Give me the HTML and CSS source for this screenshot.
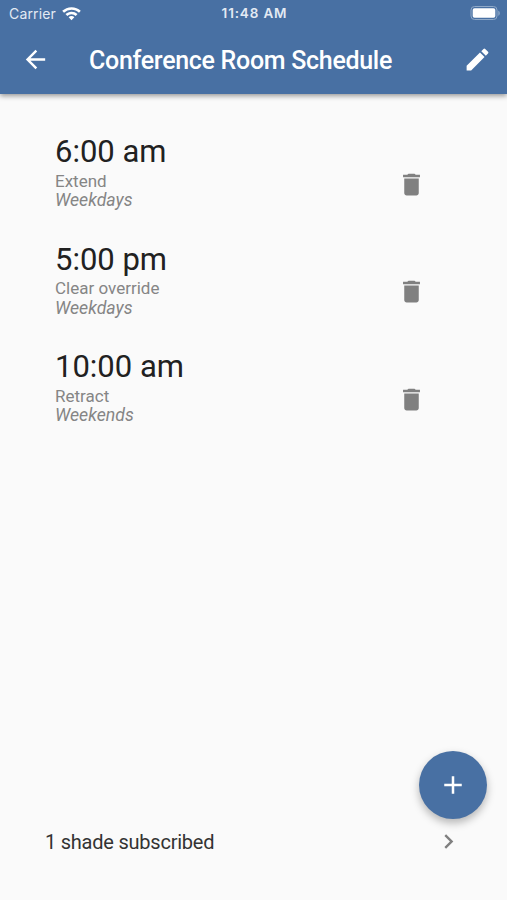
FILE: index.html
```html
<!DOCTYPE html>
<html lang="en">
<head>
<meta charset="utf-8">
<title>Conference Room Schedule</title>
<link rel="stylesheet" href="styles.css">
</head>
<body>
<div class="screen">
  <header class="header">
    <div class="status">
      <div class="carrier"><span>Carrier</span>
        <svg class="wifi" viewBox="0 0 18 13"><path d="M9 0C5.600 0 2.500 1.300.2 3.500l1.700 1.800A10.300 10.300 0 0 1 9 2.500c2.700 0 5.200 1 7.100 2.800l1.700-1.800A12.600 12.600 0 0 0 9 0zM9 4.300c-2.200 0-4.200.9-5.700 2.300L5 8.400a5.800 5.800 0 0 1 8 0l1.700-1.800A8.200 8.200 0 0 0 9 4.300zM9 8.500c-1.100 0-2 .4-2.700 1.100L9 12.500l2.700-2.900A3.900 3.900 0 0 0 9 8.500z"/></svg>
      </div>
      <div class="clock">11:48 AM</div>
      <svg class="battery" viewBox="0 0 31 15"><rect class="outline" x="1" y=".5" width="26" height="13" rx="3.500"/><rect x="2.700" y="2.200" width="22.600" height="9.600" rx="1.800"/><path class="tip" d="M28.300 4.700c2 .5 2 4.500 0 5z"/></svg>
    </div>
    <div class="toolbar">
      <svg class="back" viewBox="0 0 24 24"><path d="M20 11H7.830l5.590-5.590L12 4l-8 8 8 8 1.410-1.410L7.830 13H20v-2z"/></svg>
      <h1>Conference Room Schedule</h1>
      <svg class="edit" viewBox="0 0 24 24"><path d="M3 17.250V21h3.750L17.810 9.940l-3.750-3.750L3 17.250zM20.710 7.040a1 1 0 0 0 0-1.410l-2.340-2.340a1 1 0 0 0-1.410 0l-1.830 1.830 3.750 3.750 1.830-1.830z"/></svg>
    </div>
  </header>
  <main class="list">
    <section class="event">
      <div><div class="time">6:00 am</div><div class="action">Extend</div><div class="days">Weekdays</div></div>
      <svg class="trash" viewBox="0 0 24 24"><path d="M6 19c0 1.100.9 2 2 2h8c1.100 0 2-.9 2-2V7H6v12zM19 4h-3.500l-1-1h-5l-1 1H5v2h14V4z"/></svg>
    </section>
    <section class="event">
      <div><div class="time">5:00 pm</div><div class="action">Clear override</div><div class="days">Weekdays</div></div>
      <svg class="trash" viewBox="0 0 24 24"><path d="M6 19c0 1.100.9 2 2 2h8c1.100 0 2-.9 2-2V7H6v12zM19 4h-3.500l-1-1h-5l-1 1H5v2h14V4z"/></svg>
    </section>
    <section class="event">
      <div><div class="time">10:00 am</div><div class="action">Retract</div><div class="days">Weekends</div></div>
      <svg class="trash" viewBox="0 0 24 24"><path d="M6 19c0 1.100.9 2 2 2h8c1.100 0 2-.9 2-2V7H6v12zM19 4h-3.500l-1-1h-5l-1 1H5v2h14V4z"/></svg>
    </section>
  </main>
  <button class="fab" aria-label="Add"><svg viewBox="0 0 24 24"><path d="M19 13h-6v6h-2v-6H5v-2h6V5h2v6h6v2z"/></svg></button>
  <footer class="footer"><span>1 shade subscribed</span>
    <svg viewBox="0 0 24 24"><path d="M10 6L8.590 7.410 13.170 12l-4.580 4.590L10 18l6-6z"/></svg>
  </footer>
</div>
</body>
</html>
```
FILE: styles.css
```css
* { box-sizing: border-box; }
body { margin: 0; background: #fafafa; font-family: Roboto, sans-serif; }
svg { display: block; fill: currentColor; flex: none; }
.screen { position: relative; width: 507px; height: 900px; display: flex; flex-direction: column; overflow: hidden; background: #fafafa; }
.header { height: 94px; flex: none; background: #4870a3; color: #fff; box-shadow: 0 2px 5px rgba(0,0,0,.4); }
.status { height: 27px; display: grid; grid-template-columns: 1fr auto 1fr; align-items: center; padding: 0 6px 0 9px; font: 14px/27px Inter, sans-serif; color: #e3eaf3; }
.carrier { display: flex; align-items: center; gap: 6px; letter-spacing: .150px; }
.wifi { width: 19px; height: 14px; color: #fff; }
.clock { font-weight: 600; font-size: 13.500px; letter-spacing: .850px; margin-left: -1px; }
.battery { width: 31px; height: 15px; justify-self: end; color: #fff; }
.outline { fill: none; stroke: #8fa9c8; }
.tip { fill: #8fa9c8; }
.toolbar { height: 67px; display: flex; align-items: center; padding: 0 15px 0 21px; }
.back { width: 29px; height: 29px; margin-top: -2px; }
.toolbar h1 { flex: 1; margin: 0 0 0 39px; font-size: 25px; letter-spacing: -.300px; line-height: 30px; font-weight: 500; white-space: nowrap; }
.edit { width: 29px; height: 29px; margin-top: -2px; }
.list { flex: 1; padding: 40px 81px 0 55px; }
.event { height: 107.500px; display: flex; justify-content: space-between; align-items: flex-start; }
.time { font-size: 31px; line-height: 35px; padding-bottom: 2.500px; color: #212121; white-space: nowrap; }
.action, .days { font-size: 17px; line-height: 19.500px; color: #858585; }
.days { font-style: italic; font-size: 17.700px; }
.trash { width: 29px; height: 29px; margin-top: 35.500px; color: #808080; }
.fab { position: absolute; left: 419px; top: 751px; width: 68px; height: 68px; padding: 0; border: 0; border-radius: 50%; display: grid; place-items: center; color: #fff; background: #4870a3; box-shadow: 0 4px 8px rgba(0,0,0,.28); }
.fab svg { width: 30px; height: 30px; }
.footer { height: 117px; flex: none; display: flex; justify-content: space-between; align-items: center; padding: 0 44px 0 45px; font-size: 20px; letter-spacing: -.230px; color: #333; }
.footer svg { width: 29px; height: 29px; color: #808080; }
```
